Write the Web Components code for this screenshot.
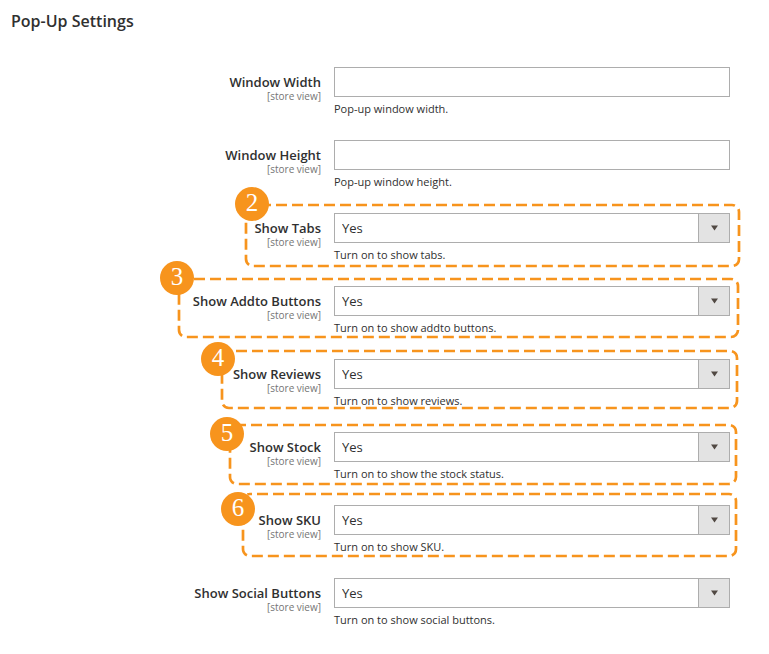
<!DOCTYPE html>
<html lang="en">
<head>
<meta charset="utf-8">
<title>Pop-Up Settings</title>
<style>
  body { margin: 0; background: #fff; color: #303030; font-family: "Open Sans", "Noto Sans", sans-serif; }
</style>
</head>
<body>
<settings-section heading="Pop-Up Settings">
  <text-field label="Window Width" note="Pop-up window width."></text-field>
  <text-field label="Window Height" note="Pop-up window height."></text-field>
  <select-field label="Show Tabs" note="Turn on to show tabs.">
    <step-outline step="2" style="--left:235px; --right:-9px; --top:-8px; --height:61px; --bx:6px; --by:-1px; --dash:-7"></step-outline>
  </select-field>
  <select-field label="Show Addto Buttons" note="Turn on to show addto buttons.">
    <step-outline step="3" style="--left:168px; --right:-8px; --top:-7px; --height:58px; --bx:-2px; --by:-1px; --dash:-8"></step-outline>
  </select-field>
  <select-field label="Show Reviews" note="Turn on to show reviews.">
    <step-outline step="4" style="--left:211px; --right:-7px; --top:-8px; --height:57px; --bx:-4px; --by:8px; --dash:-7"></step-outline>
  </select-field>
  <select-field label="Show Stock" note="Turn on to show the stock status.">
    <step-outline step="5" style="--left:219px; --right:-6px; --top:-7px; --height:59px; --bx:-3px; --by:9px; --dash:-14"></step-outline>
  </select-field>
  <select-field label="Show SKU" note="Turn on to show SKU.">
    <step-outline step="6" style="--left:232px; --right:-6px; --top:-11px; --height:62px; --bx:-5px; --by:15px; --dash:-7"></step-outline>
  </select-field>
  <select-field label="Show Social Buttons" note="Turn on to show social buttons."></select-field>
</settings-section>

<script>
class SettingsSection extends HTMLElement {
  constructor() {
    super();
    this.attachShadow({ mode: "open" }).innerHTML = `
      <style>
        :host { display: block; padding: 10px 39px 12px 11px; }
        h2 { margin: 0 0 35px; font-size: 16px; line-height: 22px; font-weight: 600; }
        .fields { display: grid; gap: 13px; }
      </style>
      <h2></h2>
      <div class="fields"><slot></slot></div>`;
    this.shadowRoot.querySelector("h2").textContent = this.getAttribute("heading");
  }
}

class FieldBase extends HTMLElement {
  constructor() {
    super();
    this.attachShadow({ mode: "open" }).innerHTML = `
      <style>
        :host { display: grid; position: relative; grid-template-columns: 310px minmax(0, 1fr); column-gap: 13px; }
        .caption { display: grid; justify-items: end; align-content: start; padding-top: 7px; }
        label { font-size: 13px; line-height: 16px; font-weight: 600; }
        .scope { font-size: 10px; line-height: 12px; color: #757575; }
        .note { margin: 0; font-size: 11px; line-height: 16px; padding-top: 4px; min-height: 26px; }
        input, select { box-sizing: border-box; display: block; width: 100%; height: 30px; margin: 0; padding: 0 7px;
          border: 1px solid #adadad; border-radius: 0; background: #fff; color: #303030;
          font-family: inherit; font-size: 13px; appearance: none; }
        select { grid-area: 1 / 1; padding-right: 40px; }
        .pick { display: grid; }
        .arrow { grid-area: 1 / 1; justify-self: end; box-sizing: border-box; width: 32px; height: 30px;
          display: grid; place-items: center; border: 1px solid #adadad; background: #e3e3e3; pointer-events: none; }
      </style>
      <div class="caption"><label for="control"></label><span class="scope">[store view]</span></div>
      <div>
        ${this.control()}
        <p class="note" id="note"></p>
      </div>
      <slot></slot>`;
    this.shadowRoot.querySelector("label").textContent = this.getAttribute("label");
    this.shadowRoot.querySelector(".note").textContent = this.getAttribute("note");
  }
}

class TextField extends FieldBase {
  control() { return `<input id="control" type="text" aria-describedby="note">`; }
}

class SelectField extends FieldBase {
  control() {
    return `<div class="pick">
      <select id="control" aria-describedby="note"><option selected>Yes</option><option>No</option></select>
      <span class="arrow"><svg width="8" height="6" viewBox="0 0 8 6" aria-hidden="true"><path d="M1 .5h7L4.5 5.500z" fill="#514943"/></svg></span>
    </div>`;
  }
}

class StepOutline extends HTMLElement {
  constructor() {
    super();
    this.attachShadow({ mode: "open" }).innerHTML = `
      <style>
        :host { position: absolute; left: var(--left); right: var(--right); top: var(--top); height: var(--height); pointer-events: none; }
        svg { display: block; width: 100%; height: 100%; overflow: visible; }
        rect { fill: none; stroke: #f7941d; stroke-width: 2.7; stroke-dasharray: 11 5; stroke-dashoffset: var(--dash); }
        .badge { position: absolute; left: var(--bx); top: var(--by); width: 34px; height: 34px; margin: -17px 0 0 -17px;
          border-radius: 50%; background: #f7941d; color: #fff; text-align: center;
          font-family: "Liberation Serif", serif; font-size: 25px; line-height: 32px; }
      </style>
      <svg aria-hidden="true"><rect width="100%" height="100%" rx="7"/></svg>
      <span class="badge"></span>`;
    this.shadowRoot.querySelector(".badge").textContent = this.getAttribute("step");
  }
}

customElements.define("settings-section", SettingsSection);
customElements.define("text-field", TextField);
customElements.define("select-field", SelectField);
customElements.define("step-outline", StepOutline);
</script>
</body>
</html>
